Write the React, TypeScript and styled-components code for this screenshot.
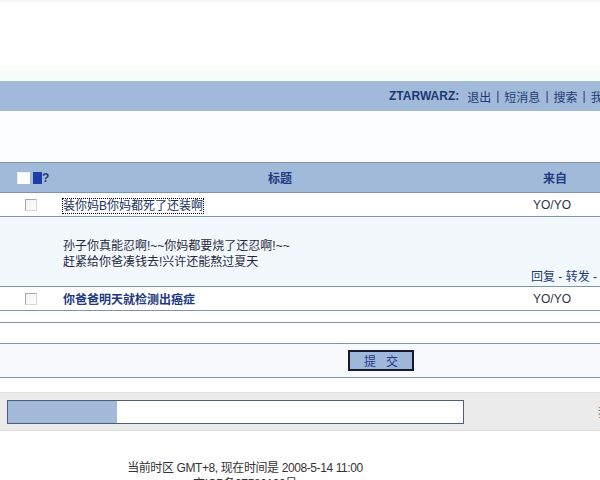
import React from "react";
import styled, { createGlobalStyle } from "styled-components";

const Global = createGlobalStyle`
  html, body { margin: 0; padding: 0; overflow: hidden; background: #ffffff; }
  body { font-family: "Liberation Sans", "Noto Sans CJK SC", sans-serif; font-size: 12px; color: #1f2a3c; }
`;

const Page = styled.div`
  width: 700px;
  display: flex;
  flex-direction: column;
`;

const Top = styled.div`
  height: 81px;
  border-top: 2px solid #f6f6f6;
  box-sizing: border-box;
  background: linear-gradient(#fefefe 0, #fefefe 62px, #fbfdf7 64px, #f6fdff 81px);
`;

const NavBar = styled.div`
  height: 30px;
  background: #a2bad9;
  display: flex;
  align-items: center;
  padding-left: 389px;
  white-space: nowrap;
  color: #1d3a73;
`;

const User = styled.b`
  font-weight: bold;
  color: #1b3775;
  margin-right: 8px;
`;

const NavLink = styled.span`
  color: #1d3a73;
`;

const Sep = styled.span`
  margin: 0 5px;
  color: #1d3a73;
`;

const Spacer = styled.div<{ $h: number; $bg?: string }>`
  height: ${(p) => p.$h}px;
  background: ${(p) => p.$bg ?? "#fcfdff"};
`;

const Table = styled.div`
  border-top: 1px solid #7e93ad;
`;

const Row = styled.div<{ $bg?: string; $h: number }>`
  display: grid;
  grid-template-columns: 55px 450px 195px;
  height: ${(p) => p.$h}px;
  background: ${(p) => p.$bg ?? "#ffffff"};
  border-bottom: 1px solid #7e93ad;
  align-items: center;
`;

const HeadCell = styled.div<{ $center?: boolean }>`
  font-weight: bold;
  color: #1c3a80;
  display: flex;
  align-items: center;
  justify-content: ${(p) => (p.$center ? "center" : "flex-start")};
`;

const FromHead = styled(HeadCell)`
  padding-left: 38px;
`;

const Box = styled.span<{ $head?: boolean }>`
  display: inline-block;
  width: ${(p) => (p.$head ? 13 : 12)}px;
  height: ${(p) => (p.$head ? 12 : 12)}px;
  box-sizing: border-box;
  border: 1px solid ${(p) => (p.$head ? "#e8eef6" : "#a9a9a9")};
  border-right-color: ${(p) => (p.$head ? "#ffffff" : "#d8d8d8")};
  border-bottom-color: ${(p) => (p.$head ? "#ffffff" : "#d8d8d8")};
  background: ${(p) => (p.$head ? "#ffffff" : "linear-gradient(135deg,#f0f0f0,#ffffff)")};
`;

const CheckCell = styled.div<{ $left: number }>`
  display: flex;
  align-items: center;
  padding-left: ${(p) => p.$left}px;
`;

const DelMark = styled.span`
  display: inline-block;
  width: 9px;
  height: 12px;
  background: #1e3fa8;
  margin-left: 3px;
`;

const Q = styled.span`
  font-weight: bold;
  color: #1c3a80;
`;

const TitleCell = styled.div`
  padding-left: 8px;
  white-space: nowrap;
`;

const TitleLink = styled.span<{ $bold?: boolean; $focus?: boolean }>`
  color: ${(p) => (p.$bold ? "#1d3a80" : "#17305e")};
  font-weight: ${(p) => (p.$bold ? "bold" : "normal")};
  outline: ${(p) => (p.$focus ? "1px dotted #000" : "none")};
`;

const FromCell = styled.div`
  padding-left: 28px;
  color: #2b3444;
`;

const Expanded = styled.div`
  display: grid;
  grid-template-columns: 55px 450px 195px;
  height: 69px;
  background: #f3f8fd;
  border-bottom: 1px solid #7e93ad;
`;

const Message = styled.div`
  grid-column: 2;
  padding: 21px 0 0 8px;
  line-height: 16px;
  color: #1f2a3c;
  white-space: nowrap;
`;

const Actions = styled.div`
  grid-column: 3;
  align-self: end;
  padding: 0 0 2px 26px;
  color: #1d3a73;
  white-space: nowrap;
`;

const Lined = styled.div<{ $h: number; $bg?: string }>`
  height: ${(p) => p.$h}px;
  background: ${(p) => p.$bg ?? "#ffffff"};
  border-top: 1px solid #7e93ad;
`;

const ButtonRow = styled.div`
  height: 33px;
  background: #f7f9fc;
  border-top: 1px solid #7e93ad;
  border-bottom: 1px solid #7e93ad;
  display: flex;
  align-items: center;
  padding-left: 348px;
`;

const Submit = styled.button`
  width: 66px;
  height: 21px;
  box-sizing: border-box;
  background: #9fb7d8;
  border: 2px solid #15182e;
  font-family: "Noto Sans CJK SC", sans-serif;
  font-size: 12px;
  color: #1c3a86;
  letter-spacing: 10px;
  padding: 0 0 0 10px;
  line-height: 16px;
`;

const Band = styled.div`
  height: 37px;
  background: #ebebeb;
  border-top: 1px solid #e0e0e0;
  border-bottom: 1px solid #dedede;
  display: flex;
  align-items: center;
  padding-left: 7px;
  gap: 134px;
`;

const Progress = styled.div`
  width: 457px;
  height: 24px;
  box-sizing: border-box;
  border: 1px solid #4c5e7a;
  background: #ffffff;
  display: flex;
`;

const Fill = styled.div`
  height: 100%;
  background: #a2b9da;
`;

const BandEdge = styled.span`
  color: #555;
`;

const Footer = styled.div`
  width: 490px;
  padding-top: 29px;
  text-align: center;
  color: #333;
  line-height: 16px;
  letter-spacing: -0.4px;
`;

export default function App() {
  return (
    <>
      <Global />
      <Page>
        <Top />
        <NavBar>
          <User>ZTARWARZ:</User>
          <NavLink>退出</NavLink>
          <Sep>|</Sep>
          <NavLink>短消息</NavLink>
          <Sep>|</Sep>
          <NavLink>搜索</NavLink>
          <Sep>|</Sep>
          <NavLink>我的</NavLink>
        </NavBar>
        <Spacer $h={51} />
        <Table>
          <Row $h={29} $bg="#a2bad9">
            <CheckCell $left={17}>
              <Box $head />
              <DelMark />
              <Q>?</Q>
            </CheckCell>
            <HeadCell $center>标题</HeadCell>
            <FromHead>来自</FromHead>
          </Row>
          <Row $h={23}>
            <CheckCell $left={25}>
              <Box />
            </CheckCell>
            <TitleCell>
              <TitleLink $focus>装你妈B你妈都死了还装啊</TitleLink>
            </TitleCell>
            <FromCell>YO/YO</FromCell>
          </Row>
          <Expanded>
            <Message>
              孙子你真能忍啊!~~你妈都要烧了还忍啊!~~
              <br />
              赶紧给你爸凑钱去!兴许还能熬过夏天
            </Message>
            <Actions>回复 - 转发 - 删除</Actions>
          </Expanded>
          <Row $h={23}>
            <CheckCell $left={25}>
              <Box />
            </CheckCell>
            <TitleCell>
              <TitleLink $bold>你爸爸明天就检测出癌症</TitleLink>
            </TitleCell>
            <FromCell>YO/YO</FromCell>
          </Row>
        </Table>
        <Spacer $h={11} $bg="#ffffff" />
        <Lined $h={20} />
        <ButtonRow>
          <Submit type="button">提交</Submit>
        </ButtonRow>
        <Spacer $h={14} $bg="#ffffff" />
        <Band>
          <Progress>
            <Fill style={{ width: `${(109 / 455) * 100}%` }} />
          </Progress>
          <BandEdge>我</BandEdge>
        </Band>
        <Footer>
          当前时区 GMT+8, 现在时间是 2008-5-14 11:00
          <br />
          京ICP备07580190号
        </Footer>
      </Page>
    </>
  );
}
